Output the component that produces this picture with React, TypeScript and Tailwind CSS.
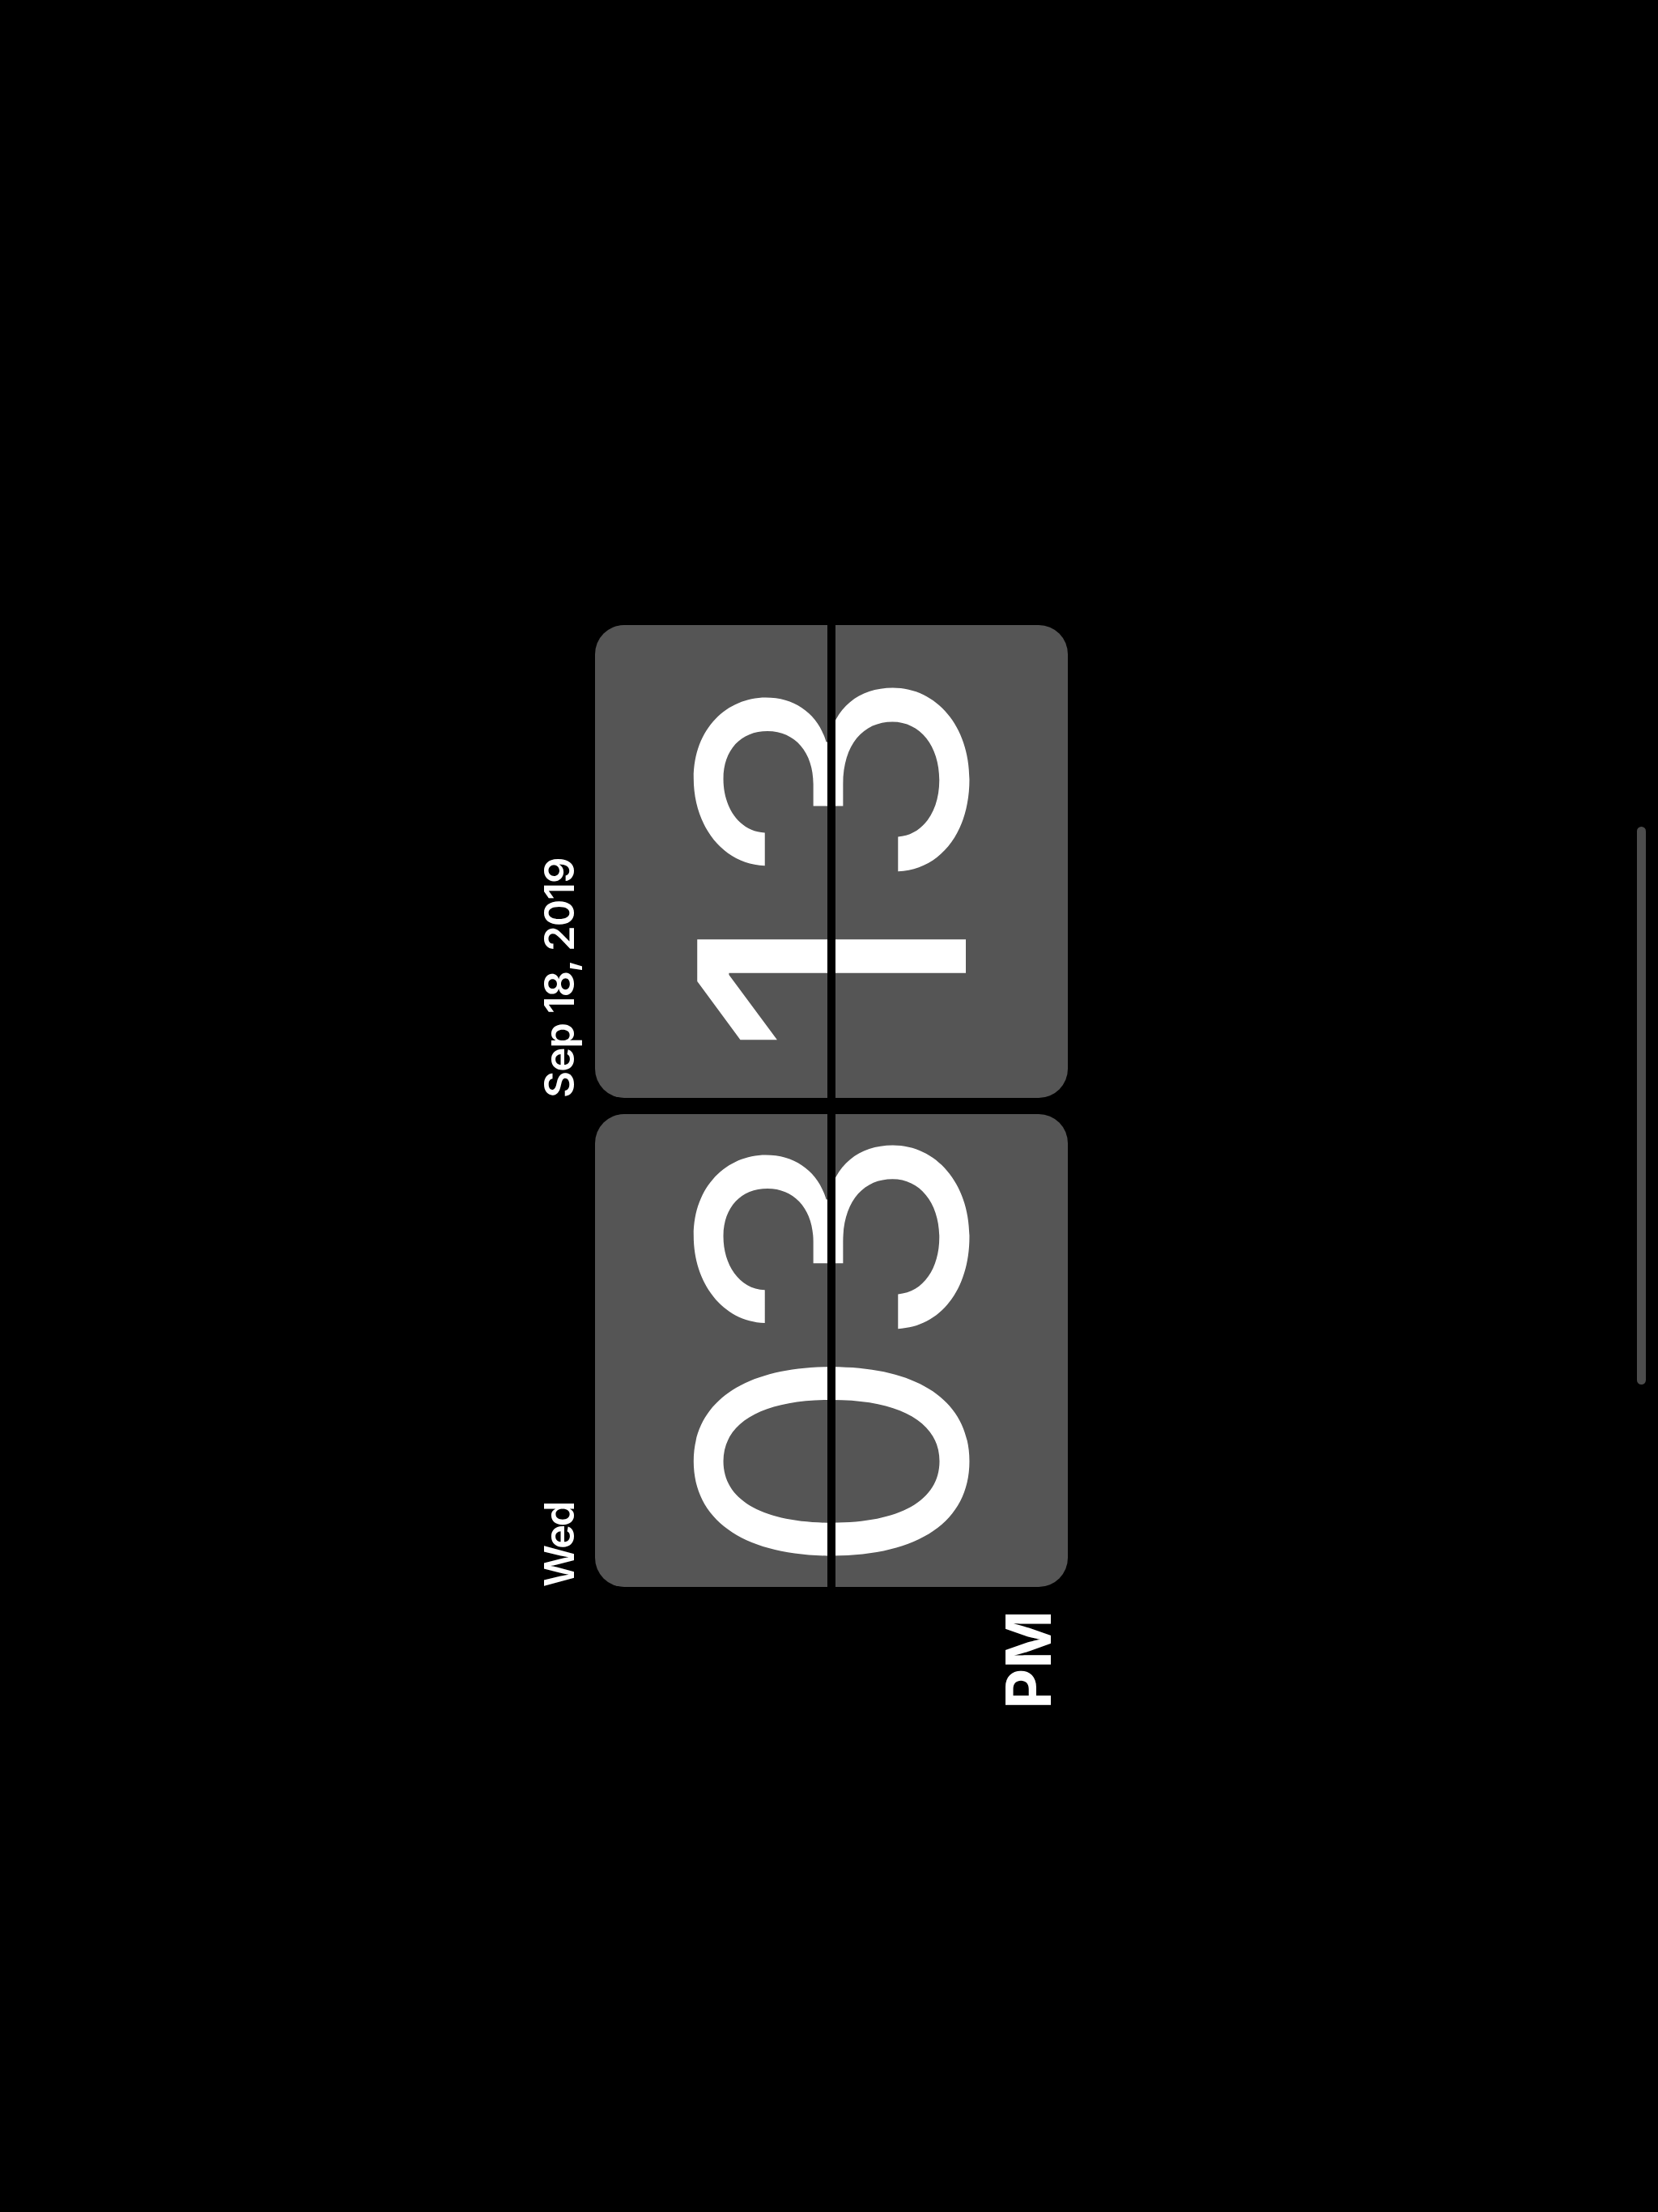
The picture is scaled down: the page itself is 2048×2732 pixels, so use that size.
function Card({ first, second, gap }: { first: string; second: string; gap: string }) {
  return (
    <div className="relative flex items-center justify-center rounded-[36px] bg-[#555555] text-white">
      <div className="flex text-[456px] font-normal leading-none">
        <span className={gap}>{first}</span>
        <span>{second}</span>
      </div>
      <div className="absolute left-0 right-0 top-[287px] h-[10px] bg-black" />
    </div>
  );
}

export default function App() {
  return (
    <div className="relative flex h-[2732px] w-[2048px] items-center justify-center overflow-hidden bg-black pl-[6px] font-['Inter',sans-serif]">
      <div className="grid shrink-0 -rotate-90 grid-cols-[150px_584px_20px_584px_150px] grid-rows-[80px_584px_80px]">
        <div />
        <div className="flex items-end pb-[19px] text-[51px] font-semibold leading-none tracking-[-0.05em] text-white">Wed</div>
        <div />
        <div className="flex items-end pb-[19px] text-[51px] font-semibold leading-none tracking-[-0.02em] text-white">
          Sep 18, 2019
        </div>
        <div />

        <div className="flex items-end justify-end pb-[10px] pr-[29px] text-[77px] font-bold leading-none text-white">PM</div>
        <Card first="0" second="3" gap="mr-[-8px]" />
        <div />
        <Card first="1" second="3" gap="mr-[16px]" />
        <div />
      </div>
      <div className="absolute right-[15px] top-[1021px] h-[689px] w-[11px] rounded-full bg-[#4d4d4d]" />
    </div>
  );
}
